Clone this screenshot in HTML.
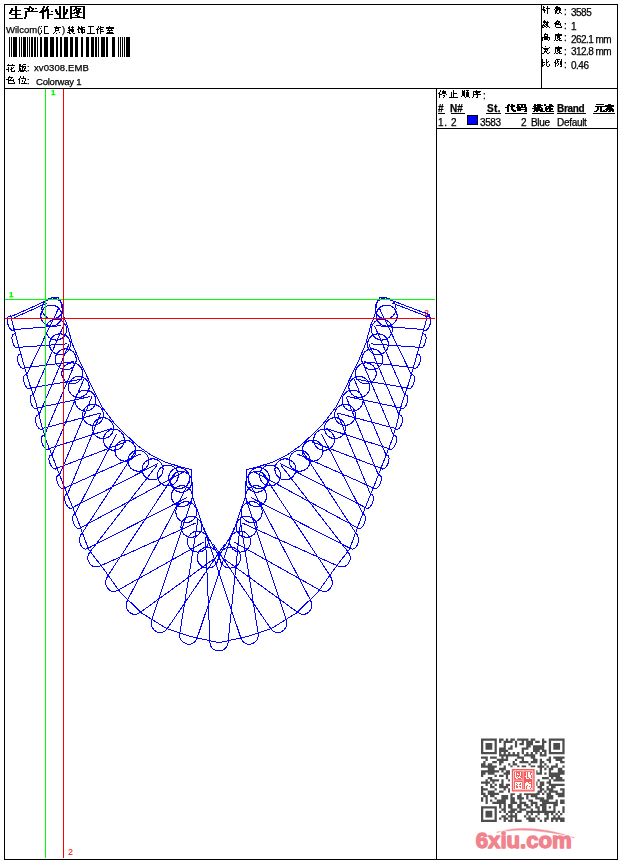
<!DOCTYPE html>
<html><head><meta charset="utf-8"><style>
html,body{margin:0;padding:0;background:#fff;width:620px;height:860px;overflow:hidden;}
body{position:relative;font-family:"Liberation Sans",sans-serif;color:#000;}
.t{position:absolute;white-space:nowrap;line-height:1;will-change:transform;-webkit-text-stroke:0.25px currentColor;}
svg{position:absolute;left:0;top:0;}
</style></head><body>
<svg width="620" height="860" viewBox="0 0 620 860" shape-rendering="crispEdges">
<path d="M4 4h614v1h-614zM4 859h614v1h-614zM4 4h1v856h-1zM617 4h1v856h-1zM4 88h614v1h-614zM541 4h1v85h-1zM436 88h1v772h-1zM436 128h182v1h-182z" fill="#000"/>
<path d="M9 37h1v20h-1zM11 37h1v20h-1zM13 37h4v20h-4zM19 37h1v20h-1zM21 37h1v20h-1zM23 37h3v20h-3zM27 37h1v20h-1zM29 37h1v20h-1zM31 37h2v20h-2zM34 37h2v20h-2zM37 37h1v20h-1zM40 37h2v20h-2zM44 37h4v20h-4zM50 37h4v20h-4zM56 37h2v20h-2zM60 37h2v20h-2zM64 37h4v20h-4zM70 37h3v20h-3zM75 37h3v20h-3zM81 37h2v20h-2zM86 37h3v20h-3zM91 37h3v20h-3zM95 37h2v20h-2zM98 37h1v20h-1zM101 37h4v20h-4zM106 37h2v20h-2zM112 37h3v20h-3zM118 37h1v20h-1zM120 37h1v20h-1zM122 37h1v20h-1zM124 37h1v20h-1zM126 37h4v20h-4z" fill="#000"/>
<path d="M15 6h2v1h-2zM15 7h2v1h-2zM11 8h2v1h-2zM15 8h2v1h-2zM11 9h2v1h-2zM15 9h2v1h-2zM10 10h11v1h-11zM10 11h2v1h-2zM15 11h2v1h-2zM9 12h3v1h-3zM15 12h2v1h-2zM9 13h2v1h-2zM15 13h2v1h-2zM11 14h10v1h-10zM15 15h2v1h-2zM15 16h2v1h-2zM15 17h2v1h-2zM9 18h14v1h-14zM29 6h2v1h-2zM29 7h3v1h-3zM24 8h6v1h-6zM31 8h3v1h-3zM35 8h2v1h-2zM27 9h3v1h-3zM32 9h2v1h-2zM28 10h2v1h-2zM31 10h2v1h-2zM25 11h13v1h-13zM25 12h2v1h-2zM25 13h2v1h-2zM25 14h2v1h-2zM25 15h2v1h-2zM25 16h2v1h-2zM24 17h2v1h-2zM24 18h2v1h-2zM43 6h2v1h-2zM47 6h2v1h-2zM43 7h2v1h-2zM46 7h2v1h-2zM42 8h2v1h-2zM46 8h2v1h-2zM42 9h2v1h-2zM45 9h4v1h-4zM41 10h8v1h-8zM40 11h6v1h-6zM47 11h2v1h-2zM51 11h2v1h-2zM39 12h5v1h-5zM47 12h2v1h-2zM42 13h2v1h-2zM47 13h2v1h-2zM42 14h2v1h-2zM47 14h6v1h-6zM42 15h2v1h-2zM47 15h2v1h-2zM42 16h2v1h-2zM47 16h2v1h-2zM42 17h2v1h-2zM47 17h2v1h-2zM42 18h2v1h-2zM47 18h2v1h-2zM59 6h2v1h-2zM63 6h2v1h-2zM59 7h2v1h-2zM63 7h2v1h-2zM59 8h2v1h-2zM63 8h2v1h-2zM55 9h2v1h-2zM59 9h2v1h-2zM63 9h2v1h-2zM66 9h2v1h-2zM55 10h2v1h-2zM59 10h2v1h-2zM63 10h2v1h-2zM66 10h2v1h-2zM55 11h3v1h-3zM59 11h2v1h-2zM63 11h2v1h-2zM66 11h2v1h-2zM56 12h2v1h-2zM59 12h2v1h-2zM63 12h4v1h-4zM56 13h5v1h-5zM63 13h4v1h-4zM57 14h4v1h-4zM63 14h3v1h-3zM59 15h2v1h-2zM63 15h2v1h-2zM59 16h2v1h-2zM63 16h2v1h-2zM59 17h2v1h-2zM63 17h2v1h-2zM54 18h15v1h-15zM70 6h15v1h-15zM70 7h2v1h-2zM75 7h2v1h-2zM83 7h2v1h-2zM70 8h2v1h-2zM75 8h6v1h-6zM83 8h2v1h-2zM70 9h2v1h-2zM74 9h3v1h-3zM78 9h3v1h-3zM83 9h2v1h-2zM70 10h2v1h-2zM73 10h2v1h-2zM76 10h4v1h-4zM83 10h2v1h-2zM70 11h2v1h-2zM76 11h4v1h-4zM83 11h2v1h-2zM70 12h2v1h-2zM74 12h8v1h-8zM83 12h2v1h-2zM70 13h5v1h-5zM76 13h3v1h-3zM83 13h2v1h-2zM70 14h2v1h-2zM77 14h2v1h-2zM83 14h2v1h-2zM70 15h2v1h-2zM75 15h3v1h-3zM83 15h2v1h-2zM70 16h2v1h-2zM77 16h3v1h-3zM83 16h2v1h-2zM70 17h15v1h-15zM70 18h2v1h-2zM83 18h2v1h-2zM41 26h1v1h-1zM44 26h4v1h-4zM44 27h1v1h-1zM40 28h1v1h-1zM44 28h1v1h-1zM44 29h1v1h-1zM41 30h1v1h-1zM44 30h1v1h-1zM41 31h1v1h-1zM44 31h1v1h-1zM41 32h1v1h-1zM44 32h1v1h-1zM40 33h1v1h-1zM44 33h5v1h-5zM56 26h1v1h-1zM54 27h7v1h-7zM55 28h4v1h-4zM55 29h1v1h-1zM58 29h1v1h-1zM55 30h4v1h-4zM55 31h1v1h-1zM54 32h1v1h-1zM59 32h1v1h-1zM53 33h1v1h-1zM56 33h1v1h-1zM69 26h1v1h-1zM72 26h1v1h-1zM68 27h2v1h-2zM71 27h3v1h-3zM68 28h2v1h-2zM72 28h1v1h-1zM69 29h5v1h-5zM68 30h6v1h-6zM69 31h1v1h-1zM71 31h3v1h-3zM67 32h3v1h-3zM72 32h1v1h-1zM69 33h2v1h-2zM73 33h2v1h-2zM78 26h1v1h-1zM81 26h1v1h-1zM78 27h2v1h-2zM81 27h4v1h-4zM78 28h5v1h-5zM77 29h2v1h-2zM80 29h5v1h-5zM78 30h1v1h-1zM81 30h2v1h-2zM84 30h1v1h-1zM78 31h1v1h-1zM81 31h2v1h-2zM84 31h1v1h-1zM78 32h2v1h-2zM81 32h4v1h-4zM82 33h1v1h-1zM88 26h6v1h-6zM90 27h1v1h-1zM90 28h1v1h-1zM90 29h1v1h-1zM90 30h1v1h-1zM90 31h1v1h-1zM90 32h1v1h-1zM87 33h8v1h-8zM98 26h1v1h-1zM100 26h1v1h-1zM98 27h1v1h-1zM100 27h4v1h-4zM97 28h1v1h-1zM99 28h2v1h-2zM96 29h3v1h-3zM100 29h3v1h-3zM97 30h1v1h-1zM100 30h1v1h-1zM97 31h1v1h-1zM100 31h4v1h-4zM97 32h1v1h-1zM100 32h1v1h-1zM97 33h1v1h-1zM100 33h1v1h-1zM109 26h1v1h-1zM106 27h8v1h-8zM106 28h8v1h-8zM108 29h1v1h-1zM111 29h1v1h-1zM107 30h6v1h-6zM109 31h1v1h-1zM107 32h6v1h-6zM106 33h8v1h-8zM8 64h1v1h-1zM12 64h1v1h-1zM7 65h8v1h-8zM8 67h1v1h-1zM11 67h1v1h-1zM13 67h1v1h-1zM8 68h1v1h-1zM11 68h2v1h-2zM6 69h3v1h-3zM10 69h2v1h-2zM8 70h1v1h-1zM11 70h1v1h-1zM14 70h1v1h-1zM8 71h1v1h-1zM11 71h4v1h-4zM19 64h2v1h-2zM23 64h3v1h-3zM19 65h2v1h-2zM22 65h1v1h-1zM19 66h7v1h-7zM19 67h1v1h-1zM22 67h2v1h-2zM25 67h1v1h-1zM19 68h2v1h-2zM22 68h1v1h-1zM24 68h2v1h-2zM19 69h2v1h-2zM22 69h1v1h-1zM24 69h1v1h-1zM19 70h7v1h-7zM18 71h1v1h-1zM20 71h4v1h-4zM26 71h1v1h-1zM9 76h1v1h-1zM8 77h5v1h-5zM8 78h1v1h-1zM11 78h1v1h-1zM6 79h3v1h-3zM10 79h1v1h-1zM13 79h1v1h-1zM8 80h6v1h-6zM8 81h1v1h-1zM13 81h1v1h-1zM8 82h1v1h-1zM14 82h1v1h-1zM8 83h7v1h-7zM20 76h1v1h-1zM23 76h1v1h-1zM20 77h1v1h-1zM23 77h1v1h-1zM19 78h1v1h-1zM21 78h5v1h-5zM18 79h2v1h-2zM25 79h1v1h-1zM19 80h1v1h-1zM22 80h1v1h-1zM25 80h1v1h-1zM19 81h1v1h-1zM22 81h1v1h-1zM24 81h1v1h-1zM19 82h1v1h-1zM24 82h1v1h-1zM19 83h1v1h-1zM21 83h6v1h-6zM543 6h1v1h-1zM547 6h1v1h-1zM543 7h2v1h-2zM547 7h1v1h-1zM543 8h1v1h-1zM546 8h4v1h-4zM542 9h3v1h-3zM547 9h1v1h-1zM543 10h3v1h-3zM547 10h1v1h-1zM544 11h1v1h-1zM547 11h1v1h-1zM544 12h1v1h-1zM547 12h1v1h-1zM547 13h1v1h-1zM556 6h2v1h-2zM555 7h5v1h-5zM555 8h6v1h-6zM554 9h1v1h-1zM556 9h5v1h-5zM555 10h3v1h-3zM559 10h2v1h-2zM555 11h2v1h-2zM559 11h1v1h-1zM555 12h2v1h-2zM559 12h2v1h-2zM555 13h1v1h-1zM557 13h2v1h-2zM561 13h1v1h-1zM544 20h1v1h-1zM543 21h3v1h-3zM547 21h1v1h-1zM543 22h6v1h-6zM544 23h1v1h-1zM546 23h2v1h-2zM543 24h1v1h-1zM545 24h3v1h-3zM542 25h3v1h-3zM546 25h2v1h-2zM542 26h1v1h-1zM544 26h2v1h-2zM547 26h2v1h-2zM542 27h2v1h-2zM546 27h1v1h-1zM549 27h1v1h-1zM557 20h1v1h-1zM556 21h4v1h-4zM555 22h2v1h-2zM558 22h2v1h-2zM554 23h5v1h-5zM560 23h1v1h-1zM555 24h6v1h-6zM555 25h1v1h-1zM560 25h1v1h-1zM555 26h1v1h-1zM561 26h1v1h-1zM556 27h6v1h-6zM545 33h1v1h-1zM544 34h4v1h-4zM544 35h1v1h-1zM547 35h1v1h-1zM544 36h4v1h-4zM542 37h8v1h-8zM542 38h1v1h-1zM544 38h4v1h-4zM549 38h1v1h-1zM542 39h1v1h-1zM544 39h4v1h-4zM549 39h1v1h-1zM542 40h1v1h-1zM548 40h1v1h-1zM558 33h1v1h-1zM555 34h7v1h-7zM555 35h7v1h-7zM555 36h1v1h-1zM557 36h3v1h-3zM555 37h1v1h-1zM557 37h3v1h-3zM555 38h1v1h-1zM557 38h1v1h-1zM559 38h2v1h-2zM555 39h1v1h-1zM558 39h2v1h-2zM554 40h1v1h-1zM556 40h2v1h-2zM559 40h3v1h-3zM545 46h1v1h-1zM542 47h1v1h-1zM549 47h1v1h-1zM543 48h6v1h-6zM544 49h4v1h-4zM545 50h1v1h-1zM547 50h1v1h-1zM544 51h3v1h-3zM544 52h1v1h-1zM546 52h1v1h-1zM549 52h1v1h-1zM542 53h2v1h-2zM547 53h2v1h-2zM558 46h1v1h-1zM555 47h7v1h-7zM555 48h7v1h-7zM555 49h1v1h-1zM557 49h3v1h-3zM555 50h1v1h-1zM557 50h3v1h-3zM555 51h1v1h-1zM557 51h1v1h-1zM559 51h2v1h-2zM555 52h1v1h-1zM558 52h2v1h-2zM554 53h1v1h-1zM556 53h2v1h-2zM559 53h3v1h-3zM542 59h1v1h-1zM546 59h1v1h-1zM542 60h1v1h-1zM546 60h1v1h-1zM542 61h1v1h-1zM546 61h1v1h-1zM548 61h1v1h-1zM542 62h3v1h-3zM546 62h2v1h-2zM542 63h1v1h-1zM546 63h1v1h-1zM542 64h1v1h-1zM544 64h1v1h-1zM546 64h1v1h-1zM549 64h1v1h-1zM542 65h2v1h-2zM546 65h1v1h-1zM549 65h1v1h-1zM542 66h1v1h-1zM547 66h2v1h-2zM556 59h4v1h-4zM561 59h1v1h-1zM555 60h1v1h-1zM557 60h1v1h-1zM561 60h1v1h-1zM555 61h1v1h-1zM557 61h2v1h-2zM560 61h2v1h-2zM554 62h2v1h-2zM557 62h1v1h-1zM560 62h2v1h-2zM555 63h2v1h-2zM558 63h1v1h-1zM560 63h2v1h-2zM555 64h1v1h-1zM558 64h1v1h-1zM560 64h2v1h-2zM555 65h1v1h-1zM557 65h1v1h-1zM561 65h1v1h-1zM555 66h1v1h-1zM560 66h2v1h-2zM440 90h1v1h-1zM443 90h1v1h-1zM440 91h1v1h-1zM442 91h4v1h-4zM439 92h1v1h-1zM442 92h4v1h-4zM438 93h2v1h-2zM442 93h4v1h-4zM439 94h3v1h-3zM446 94h1v1h-1zM439 95h1v1h-1zM443 95h2v1h-2zM439 96h1v1h-1zM444 96h1v1h-1zM439 97h1v1h-1zM443 97h1v1h-1zM453 90h1v1h-1zM453 91h1v1h-1zM451 92h1v1h-1zM453 92h1v1h-1zM451 93h1v1h-1zM453 93h4v1h-4zM451 94h1v1h-1zM453 94h1v1h-1zM451 95h1v1h-1zM453 95h1v1h-1zM451 96h1v1h-1zM453 96h1v1h-1zM449 97h9v1h-9zM462 90h1v1h-1zM464 90h1v1h-1zM466 90h3v1h-3zM462 91h3v1h-3zM467 91h1v1h-1zM462 92h3v1h-3zM466 92h3v1h-3zM462 93h3v1h-3zM466 93h3v1h-3zM462 94h3v1h-3zM466 94h3v1h-3zM462 95h3v1h-3zM466 95h3v1h-3zM461 96h1v1h-1zM464 96h1v1h-1zM466 96h3v1h-3zM465 97h1v1h-1zM469 97h1v1h-1zM476 90h1v1h-1zM473 91h8v1h-8zM473 92h1v1h-1zM475 92h5v1h-5zM473 93h1v1h-1zM476 93h2v1h-2zM473 94h8v1h-8zM473 95h1v1h-1zM477 95h1v1h-1zM473 96h1v1h-1zM477 96h1v1h-1zM472 97h1v1h-1zM476 97h2v1h-2zM508 104h2v1h-2zM511 104h2v1h-2zM507 105h3v1h-3zM511 105h4v1h-4zM507 106h2v1h-2zM510 106h5v1h-5zM505 107h4v1h-4zM511 107h2v1h-2zM507 108h2v1h-2zM511 108h2v1h-2zM507 109h2v1h-2zM511 109h3v1h-3zM507 110h2v1h-2zM512 110h4v1h-4zM507 111h2v1h-2zM513 111h3v1h-3zM517 104h9v1h-9zM517 105h2v1h-2zM521 105h2v1h-2zM524 105h2v1h-2zM517 106h3v1h-3zM521 106h2v1h-2zM524 106h2v1h-2zM516 107h11v1h-11zM517 108h4v1h-4zM525 108h2v1h-2zM517 109h10v1h-10zM517 110h4v1h-4zM525 110h2v1h-2zM524 111h3v1h-3zM534 104h2v1h-2zM537 104h4v1h-4zM534 105h9v1h-9zM533 106h3v1h-3zM537 106h4v1h-4zM534 107h8v1h-8zM532 108h8v1h-8zM541 108h2v1h-2zM534 109h9v1h-9zM534 110h9v1h-9zM533 111h2v1h-2zM536 111h2v1h-2zM540 111h3v1h-3zM544 104h2v1h-2zM549 104h3v1h-3zM544 105h2v1h-2zM549 105h4v1h-4zM546 106h8v1h-8zM545 107h2v1h-2zM548 107h3v1h-3zM545 108h8v1h-8zM545 109h3v1h-3zM549 109h4v1h-4zM545 110h2v1h-2zM549 110h2v1h-2zM543 111h2v1h-2zM546 111h8v1h-8zM596 104h8v1h-8zM595 106h10v1h-10zM597 107h2v1h-2zM600 107h2v1h-2zM597 108h2v1h-2zM600 108h2v1h-2zM597 109h2v1h-2zM600 109h2v1h-2zM596 110h2v1h-2zM600 110h2v1h-2zM603 110h2v1h-2zM594 111h3v1h-3zM600 111h5v1h-5zM608 104h3v1h-3zM605 105h9v1h-9zM605 106h9v1h-9zM607 107h5v1h-5zM606 108h7v1h-7zM605 109h9v1h-9zM606 110h2v1h-2zM609 110h5v1h-5zM605 111h2v1h-2zM608 111h3v1h-3zM612 111h2v1h-2z" fill="#000"/>
<path d="M438 113h7v1h-7zM451 113h14v1h-14zM486 113h15v1h-15zM505 113h22v1h-22zM532 113h22v1h-22zM557 113h29v1h-29zM593 113h22v1h-22z" fill="#000"/>
<rect x="467" y="115" width="11" height="10" fill="#000"/><rect x="468" y="116" width="9" height="8" fill="#0000ff"/>
</svg>
<svg width="620" height="860" viewBox="0 0 620 860"><path d="M11 317 L18 343.7 L25 368.8 L30 385.5 L36.3 403.7 L41.8 426 L46 440 L62 481 L77.7 520 L88.4 549 L104.8 570.6 L120 592 L141.6 613 L166.8 628.7 L190 636.4 L219 642.7 L248 636.4 L271.2 628.7 L296.4 613 L318 592 L333.2 570.6 L349.6 549 L360.3 520 L376 481 L392 440 L396.2 426 L401.7 403.7 L408 385.5 L413 368.8 L420 343.7 L427 317 M47 300.5 L52 297.5 L58 297.5 L61 302 L63.4 316 L67.4 325.5 L72 343 L78.7 359 L82 366 L93 389 L102 407 L115 424 L125 434 L138 446 L151 455 L164 461.6 L179 466.5 L191.3 469.7 L193 498 L204.5 531 L219 556 L233.5 531 L245 498 L246.7 469.7 L259 466.5 L274 461.6 L287 455 L300 446 L313 434 L323 424 L336 407 L345 389 L356 366 L359.3 359 L366 343 L370.6 325.5 L374.6 316 L377 302 L380 297.5 L386 297.5 L391 300.5 M10 317L47 300.5M11.5 319L47.5 302.8 M430 315L392 300.5M428.5 317L391.5 302.8M430 315L424 312M430 315L425 317 M10.7 316C3.7 314.8 8.8 334.1 14.3 329.6L61.5 325.6 M15.4 333.8C8.3 332.6 13.5 351.9 19 347.3L66.6 343.9 M20.9 354.2C13.9 353 19.2 372.3 24.7 367.7L74 361.7 M58.8 307.9L26.7 374.5C19.6 373.6 25.4 392.7 30.8 387.9L82.2 379.2 M63.3 326.3L33.3 394.6C26.2 393.7 32.3 412.8 37.6 407.9L90.5 396.5 M68.9 344.5L39 414.9C32 413.6 36.9 433 42.5 428.5L100.1 413.2 M75.6 362.2L44.4 435.4C37.3 434.8 44 453.6 49.1 448.6L112.2 428.3 M83.7 379.4L51.9 455.1C44.8 454.7 52 473.3 57 468.2L126 441.8 M92 396.6L59.6 474.8C52.4 474.5 59.8 493 64.7 487.9L140.9 453.9 M100.7 413.5L67.4 494.5C60.3 494.1 67.7 512.7 72.7 507.5L157.7 463.6 M116.7 433.7L75.2 513.5C69.1 515.5 74.9 532.5 80.7 527.7L184 471.7 M135.3 451.4L82.4 532.7C76.5 537.5 80.8 552.8 88.1 548.2L187.3 497.5 M157.2 464.9L90.3 551.5C83.6 559.7 91.5 570.2 101 565.6L195.4 523.2 M176.4 471.8L108.1 575.3C102.1 584.5 108.9 595.3 118.5 589.9L204 542 M189.3 481.9L127.8 599.6C122.7 609.3 131.8 618.6 140.7 612.1L213.8 559 M191.3 501.2L151.9 619.4C148.4 629.8 160.9 638 167.1 628.9L224.7 544.2 M197.9 519.4L179.8 633.4C178 644.2 193.5 648.8 197 638.4L234.2 527.9 M205.5 537.3L210 642.7C210.5 653.7 226.9 653.6 228 642.7L241.7 510.4 M203.8 527.9L241 638.4C244.5 648.8 260 644.2 258.2 633.4L240.1 519.4 M213.3 544.2L270.9 628.9C277.1 638 289.6 629.8 286.1 619.4L246.7 501.2 M224.2 559L297.3 612.1C306.2 618.6 315.3 609.3 310.2 599.6L248.7 481.9 M234 542L319.5 589.9C329.1 595.3 335.9 584.5 329.9 575.3L261.6 471.8 M242.6 523.2L337 565.6C346.5 570.2 354.4 559.7 347.7 551.5L280.8 464.9 M250.7 497.5L349.9 548.2C357.2 552.8 361.5 537.5 355.6 532.7L302.7 451.4 M254 471.7L357.3 527.7C363.1 532.5 368.9 515.5 362.8 513.5L321.3 433.7 M280.3 463.6L365.3 507.5C370.3 512.7 377.7 494.1 370.6 494.5L337.3 413.5 M297.1 453.9L373.3 487.9C378.2 493 385.6 474.5 378.4 474.8L346 396.6 M312 441.8L381 468.2C386 473.3 393.2 454.7 386.1 455.1L354.3 379.4 M325.8 428.3L388.9 448.6C394 453.6 400.7 434.8 393.6 435.4L362.4 362.2 M337.9 413.2L395.5 428.5C401.1 433 406 413.6 399 414.9L369.1 344.5 M347.5 396.5L400.4 407.9C405.7 412.8 411.8 393.7 404.7 394.6L374.7 326.3 M355.8 379.2L407.2 387.9C412.6 392.7 418.4 373.6 411.3 374.5L379.2 307.9 M364 361.7L413.3 367.7C418.8 372.3 424.1 353 417.1 354.2 M371.4 343.9L419 347.3C424.5 351.9 429.7 332.6 422.6 333.8 M376.5 325.6L423.7 329.6C429.2 334.1 434.3 314.8 427.3 316 M41.9 308.4a10.5 10.5 0 1 0 21 0a10.5 10.5 0 1 0 -21 0 M40.8 315.6a10.5 10.5 0 1 0 21 0a10.5 10.5 0 1 0 -21 0 M45.6 329.6a10.5 10.5 0 1 0 21 0a10.5 10.5 0 1 0 -21 0 M49.5 344.3a10.5 10.5 0 1 0 21 0a10.5 10.5 0 1 0 -21 0 M55.3 359.3a10.5 10.5 0 1 0 21 0a10.5 10.5 0 1 0 -21 0 M61.7 373.3a10.5 10.5 0 1 0 21 0a10.5 10.5 0 1 0 -21 0 M68.2 386.9a10.5 10.5 0 1 0 21 0a10.5 10.5 0 1 0 -21 0 M74.9 400.6a10.5 10.5 0 1 0 21 0a10.5 10.5 0 1 0 -21 0 M82.5 414.9a10.5 10.5 0 1 0 21 0a10.5 10.5 0 1 0 -21 0 M92.5 428.1a10.5 10.5 0 1 0 21 0a10.5 10.5 0 1 0 -21 0 M103.4 439.8a10.5 10.5 0 1 0 21 0a10.5 10.5 0 1 0 -21 0 M114.9 450.7a10.5 10.5 0 1 0 21 0a10.5 10.5 0 1 0 -21 0 M127.8 460.8a10.5 10.5 0 1 0 21 0a10.5 10.5 0 1 0 -21 0 M142.1 469.3a10.5 10.5 0 1 0 21 0a10.5 10.5 0 1 0 -21 0 M157.4 475.5a10.5 10.5 0 1 0 21 0a10.5 10.5 0 1 0 -21 0 M168.6 478.1a10.5 10.5 0 1 0 21 0a10.5 10.5 0 1 0 -21 0 M170.7 481.8a10.5 10.5 0 1 0 21 0a10.5 10.5 0 1 0 -21 0 M171.4 496.1a10.5 10.5 0 1 0 21 0a10.5 10.5 0 1 0 -21 0 M175.8 512.1a10.5 10.5 0 1 0 21 0a10.5 10.5 0 1 0 -21 0 M180.9 526.9a10.5 10.5 0 1 0 21 0a10.5 10.5 0 1 0 -21 0 M187.4 541.6a10.5 10.5 0 1 0 21 0a10.5 10.5 0 1 0 -21 0 M197.3 557.6a10.5 10.5 0 1 0 21 0a10.5 10.5 0 1 0 -21 0 M219.7 557.6a10.5 10.5 0 1 0 21 0a10.5 10.5 0 1 0 -21 0 M229.6 541.6a10.5 10.5 0 1 0 21 0a10.5 10.5 0 1 0 -21 0 M236.1 526.9a10.5 10.5 0 1 0 21 0a10.5 10.5 0 1 0 -21 0 M241.2 512.1a10.5 10.5 0 1 0 21 0a10.5 10.5 0 1 0 -21 0 M245.6 496.1a10.5 10.5 0 1 0 21 0a10.5 10.5 0 1 0 -21 0 M246.3 481.8a10.5 10.5 0 1 0 21 0a10.5 10.5 0 1 0 -21 0 M248.4 478.1a10.5 10.5 0 1 0 21 0a10.5 10.5 0 1 0 -21 0 M259.6 475.5a10.5 10.5 0 1 0 21 0a10.5 10.5 0 1 0 -21 0 M274.9 469.3a10.5 10.5 0 1 0 21 0a10.5 10.5 0 1 0 -21 0 M289.2 460.8a10.5 10.5 0 1 0 21 0a10.5 10.5 0 1 0 -21 0 M302.1 450.7a10.5 10.5 0 1 0 21 0a10.5 10.5 0 1 0 -21 0 M313.6 439.8a10.5 10.5 0 1 0 21 0a10.5 10.5 0 1 0 -21 0 M324.5 428.1a10.5 10.5 0 1 0 21 0a10.5 10.5 0 1 0 -21 0 M334.5 414.9a10.5 10.5 0 1 0 21 0a10.5 10.5 0 1 0 -21 0 M342.1 400.6a10.5 10.5 0 1 0 21 0a10.5 10.5 0 1 0 -21 0 M348.8 386.9a10.5 10.5 0 1 0 21 0a10.5 10.5 0 1 0 -21 0 M355.3 373.3a10.5 10.5 0 1 0 21 0a10.5 10.5 0 1 0 -21 0 M361.7 359.3a10.5 10.5 0 1 0 21 0a10.5 10.5 0 1 0 -21 0 M367.5 344.3a10.5 10.5 0 1 0 21 0a10.5 10.5 0 1 0 -21 0 M371.4 329.6a10.5 10.5 0 1 0 21 0a10.5 10.5 0 1 0 -21 0 M376.2 315.6a10.5 10.5 0 1 0 21 0a10.5 10.5 0 1 0 -21 0 M375.1 308.4a10.5 10.5 0 1 0 21 0a10.5 10.5 0 1 0 -21 0" fill="none" stroke="#0000ff" stroke-width="1" shape-rendering="crispEdges"/></svg>
<svg width="620" height="860" viewBox="0 0 620 860" shape-rendering="crispEdges"><path d="M45 89h1v769h-1zM5 299h430v1h-430z" fill="#00ff00"/><path d="M63 89h1v769h-1zM5 318h430v1h-430z" fill="#ff0000"/></svg>
<svg width="620" height="860" viewBox="0 0 620 860"><path d="M481.00 738.50h15.82v2.26h-15.82zM499.08 738.50h4.52v2.26h-4.52zM505.85 738.50h2.26v2.26h-2.26zM510.37 738.50h4.52v2.26h-4.52zM517.15 738.50h11.30v2.26h-11.30zM530.71 738.50h4.52v2.26h-4.52zM542.01 738.50h2.26v2.26h-2.26zM548.78 738.50h15.82v2.26h-15.82zM481.00 740.76h2.26v2.26h-2.26zM494.56 740.76h2.26v2.26h-2.26zM499.08 740.76h2.26v2.26h-2.26zM503.59 740.76h9.04v2.26h-9.04zM514.89 740.76h2.26v2.26h-2.26zM521.67 740.76h2.26v2.26h-2.26zM526.19 740.76h6.78v2.26h-6.78zM535.23 740.76h4.52v2.26h-4.52zM542.01 740.76h4.52v2.26h-4.52zM548.78 740.76h2.26v2.26h-2.26zM562.34 740.76h2.26v2.26h-2.26zM481.00 743.02h2.26v2.26h-2.26zM485.52 743.02h6.78v2.26h-6.78zM494.56 743.02h2.26v2.26h-2.26zM503.59 743.02h2.26v2.26h-2.26zM514.89 743.02h2.26v2.26h-2.26zM519.41 743.02h4.52v2.26h-4.52zM526.19 743.02h6.78v2.26h-6.78zM542.01 743.02h2.26v2.26h-2.26zM548.78 743.02h2.26v2.26h-2.26zM553.30 743.02h6.78v2.26h-6.78zM562.34 743.02h2.26v2.26h-2.26zM481.00 745.28h2.26v2.26h-2.26zM485.52 745.28h6.78v2.26h-6.78zM494.56 745.28h2.26v2.26h-2.26zM503.59 745.28h2.26v2.26h-2.26zM510.37 745.28h2.26v2.26h-2.26zM514.89 745.28h2.26v2.26h-2.26zM526.19 745.28h4.52v2.26h-4.52zM532.97 745.28h11.30v2.26h-11.30zM548.78 745.28h2.26v2.26h-2.26zM553.30 745.28h6.78v2.26h-6.78zM562.34 745.28h2.26v2.26h-2.26zM481.00 747.54h2.26v2.26h-2.26zM485.52 747.54h6.78v2.26h-6.78zM494.56 747.54h2.26v2.26h-2.26zM499.08 747.54h6.78v2.26h-6.78zM508.11 747.54h4.52v2.26h-4.52zM521.67 747.54h6.78v2.26h-6.78zM532.97 747.54h11.30v2.26h-11.30zM548.78 747.54h2.26v2.26h-2.26zM553.30 747.54h6.78v2.26h-6.78zM562.34 747.54h2.26v2.26h-2.26zM481.00 749.80h2.26v2.26h-2.26zM494.56 749.80h2.26v2.26h-2.26zM499.08 749.80h9.04v2.26h-9.04zM521.67 749.80h2.26v2.26h-2.26zM532.97 749.80h6.78v2.26h-6.78zM542.01 749.80h4.52v2.26h-4.52zM548.78 749.80h2.26v2.26h-2.26zM562.34 749.80h2.26v2.26h-2.26zM481.00 752.06h15.82v2.26h-15.82zM499.08 752.06h2.26v2.26h-2.26zM503.59 752.06h2.26v2.26h-2.26zM508.11 752.06h2.26v2.26h-2.26zM512.63 752.06h2.26v2.26h-2.26zM517.15 752.06h2.26v2.26h-2.26zM521.67 752.06h2.26v2.26h-2.26zM526.19 752.06h2.26v2.26h-2.26zM530.71 752.06h2.26v2.26h-2.26zM535.23 752.06h2.26v2.26h-2.26zM539.75 752.06h2.26v2.26h-2.26zM544.26 752.06h2.26v2.26h-2.26zM548.78 752.06h15.82v2.26h-15.82zM499.08 754.32h20.34v2.26h-20.34zM523.93 754.32h11.30v2.26h-11.30zM539.75 754.32h6.78v2.26h-6.78zM481.00 756.58h6.78v2.26h-6.78zM490.04 756.58h6.78v2.26h-6.78zM501.34 756.58h2.26v2.26h-2.26zM505.85 756.58h2.26v2.26h-2.26zM517.15 756.58h6.78v2.26h-6.78zM530.71 756.58h4.52v2.26h-4.52zM548.78 756.58h2.26v2.26h-2.26zM553.30 756.58h11.30v2.26h-11.30zM485.52 758.84h2.26v2.26h-2.26zM496.82 758.84h11.30v2.26h-11.30zM514.89 758.84h2.26v2.26h-2.26zM521.67 758.84h2.26v2.26h-2.26zM532.97 758.84h4.52v2.26h-4.52zM539.75 758.84h2.26v2.26h-2.26zM546.52 758.84h4.52v2.26h-4.52zM555.56 758.84h6.78v2.26h-6.78zM483.26 761.09h2.26v2.26h-2.26zM492.30 761.09h4.52v2.26h-4.52zM499.08 761.09h4.52v2.26h-4.52zM512.63 761.09h2.26v2.26h-2.26zM519.41 761.09h9.04v2.26h-9.04zM530.71 761.09h6.78v2.26h-6.78zM539.75 761.09h4.52v2.26h-4.52zM548.78 761.09h2.26v2.26h-2.26zM560.08 761.09h4.52v2.26h-4.52zM481.00 763.35h4.52v2.26h-4.52zM487.78 763.35h4.52v2.26h-4.52zM499.08 763.35h2.26v2.26h-2.26zM508.11 763.35h2.26v2.26h-2.26zM512.63 763.35h4.52v2.26h-4.52zM528.45 763.35h2.26v2.26h-2.26zM539.75 763.35h2.26v2.26h-2.26zM544.26 763.35h2.26v2.26h-2.26zM555.56 763.35h2.26v2.26h-2.26zM481.00 765.61h15.82v2.26h-15.82zM503.59 765.61h2.26v2.26h-2.26zM510.37 765.61h2.26v2.26h-2.26zM517.15 765.61h2.26v2.26h-2.26zM521.67 765.61h4.52v2.26h-4.52zM530.71 765.61h4.52v2.26h-4.52zM537.49 765.61h6.78v2.26h-6.78zM546.52 765.61h2.26v2.26h-2.26zM551.04 765.61h6.78v2.26h-6.78zM562.34 765.61h2.26v2.26h-2.26zM487.78 767.87h6.78v2.26h-6.78zM499.08 767.87h6.78v2.26h-6.78zM510.37 767.87h4.52v2.26h-4.52zM521.67 767.87h4.52v2.26h-4.52zM528.45 767.87h4.52v2.26h-4.52zM539.75 767.87h2.26v2.26h-2.26zM544.26 767.87h2.26v2.26h-2.26zM548.78 767.87h4.52v2.26h-4.52zM557.82 767.87h4.52v2.26h-4.52zM481.00 770.13h18.08v2.26h-18.08zM501.34 770.13h2.26v2.26h-2.26zM505.85 770.13h11.30v2.26h-11.30zM521.67 770.13h4.52v2.26h-4.52zM528.45 770.13h2.26v2.26h-2.26zM532.97 770.13h4.52v2.26h-4.52zM539.75 770.13h2.26v2.26h-2.26zM548.78 770.13h2.26v2.26h-2.26zM557.82 770.13h6.78v2.26h-6.78zM481.00 772.39h4.52v2.26h-4.52zM487.78 772.39h6.78v2.26h-6.78zM503.59 772.39h15.82v2.26h-15.82zM526.19 772.39h2.26v2.26h-2.26zM530.71 772.39h11.30v2.26h-11.30zM544.26 772.39h2.26v2.26h-2.26zM548.78 772.39h15.82v2.26h-15.82zM481.00 774.65h2.26v2.26h-2.26zM494.56 774.65h2.26v2.26h-2.26zM499.08 774.65h4.52v2.26h-4.52zM505.85 774.65h2.26v2.26h-2.26zM512.63 774.65h2.26v2.26h-2.26zM526.19 774.65h2.26v2.26h-2.26zM548.78 774.65h11.30v2.26h-11.30zM487.78 776.91h4.52v2.26h-4.52zM505.85 776.91h2.26v2.26h-2.26zM510.37 776.91h6.78v2.26h-6.78zM519.41 776.91h2.26v2.26h-2.26zM526.19 776.91h6.78v2.26h-6.78zM542.01 776.91h6.78v2.26h-6.78zM551.04 776.91h2.26v2.26h-2.26zM555.56 776.91h6.78v2.26h-6.78zM485.52 779.17h2.26v2.26h-2.26zM490.04 779.17h9.04v2.26h-9.04zM501.34 779.17h2.26v2.26h-2.26zM508.11 779.17h4.52v2.26h-4.52zM517.15 779.17h6.78v2.26h-6.78zM526.19 779.17h2.26v2.26h-2.26zM530.71 779.17h2.26v2.26h-2.26zM537.49 779.17h2.26v2.26h-2.26zM548.78 779.17h2.26v2.26h-2.26zM553.30 779.17h11.30v2.26h-11.30zM481.00 781.43h9.04v2.26h-9.04zM492.30 781.43h2.26v2.26h-2.26zM501.34 781.43h2.26v2.26h-2.26zM510.37 781.43h6.78v2.26h-6.78zM521.67 781.43h11.30v2.26h-11.30zM535.23 781.43h2.26v2.26h-2.26zM539.75 781.43h4.52v2.26h-4.52zM546.52 781.43h4.52v2.26h-4.52zM485.52 783.69h2.26v2.26h-2.26zM490.04 783.69h2.26v2.26h-2.26zM494.56 783.69h2.26v2.26h-2.26zM499.08 783.69h4.52v2.26h-4.52zM505.85 783.69h9.04v2.26h-9.04zM519.41 783.69h2.26v2.26h-2.26zM523.93 783.69h2.26v2.26h-2.26zM528.45 783.69h9.04v2.26h-9.04zM539.75 783.69h4.52v2.26h-4.52zM548.78 783.69h15.82v2.26h-15.82zM481.00 785.95h2.26v2.26h-2.26zM490.04 785.95h4.52v2.26h-4.52zM499.08 785.95h9.04v2.26h-9.04zM510.37 785.95h2.26v2.26h-2.26zM519.41 785.95h11.30v2.26h-11.30zM537.49 785.95h4.52v2.26h-4.52zM546.52 785.95h2.26v2.26h-2.26zM551.04 785.95h4.52v2.26h-4.52zM481.00 788.21h6.78v2.26h-6.78zM494.56 788.21h2.26v2.26h-2.26zM503.59 788.21h2.26v2.26h-2.26zM508.11 788.21h2.26v2.26h-2.26zM512.63 788.21h2.26v2.26h-2.26zM519.41 788.21h6.78v2.26h-6.78zM530.71 788.21h4.52v2.26h-4.52zM539.75 788.21h4.52v2.26h-4.52zM546.52 788.21h6.78v2.26h-6.78zM560.08 788.21h4.52v2.26h-4.52zM481.00 790.47h2.26v2.26h-2.26zM487.78 790.47h6.78v2.26h-6.78zM499.08 790.47h4.52v2.26h-4.52zM508.11 790.47h9.04v2.26h-9.04zM519.41 790.47h2.26v2.26h-2.26zM528.45 790.47h2.26v2.26h-2.26zM532.97 790.47h2.26v2.26h-2.26zM537.49 790.47h4.52v2.26h-4.52zM544.26 790.47h2.26v2.26h-2.26zM548.78 790.47h9.04v2.26h-9.04zM562.34 790.47h2.26v2.26h-2.26zM481.00 792.73h4.52v2.26h-4.52zM487.78 792.73h11.30v2.26h-11.30zM510.37 792.73h4.52v2.26h-4.52zM519.41 792.73h2.26v2.26h-2.26zM523.93 792.73h15.82v2.26h-15.82zM542.01 792.73h2.26v2.26h-2.26zM546.52 792.73h4.52v2.26h-4.52zM555.56 792.73h9.04v2.26h-9.04zM483.26 794.99h4.52v2.26h-4.52zM490.04 794.99h4.52v2.26h-4.52zM501.34 794.99h6.78v2.26h-6.78zM510.37 794.99h2.26v2.26h-2.26zM517.15 794.99h4.52v2.26h-4.52zM526.19 794.99h2.26v2.26h-2.26zM530.71 794.99h6.78v2.26h-6.78zM546.52 794.99h6.78v2.26h-6.78zM557.82 794.99h6.78v2.26h-6.78zM481.00 797.25h2.26v2.26h-2.26zM485.52 797.25h2.26v2.26h-2.26zM494.56 797.25h2.26v2.26h-2.26zM501.34 797.25h6.78v2.26h-6.78zM510.37 797.25h4.52v2.26h-4.52zM517.15 797.25h6.78v2.26h-6.78zM526.19 797.25h2.26v2.26h-2.26zM535.23 797.25h9.04v2.26h-9.04zM546.52 797.25h6.78v2.26h-6.78zM481.00 799.51h2.26v2.26h-2.26zM485.52 799.51h2.26v2.26h-2.26zM490.04 799.51h2.26v2.26h-2.26zM496.82 799.51h9.04v2.26h-9.04zM510.37 799.51h4.52v2.26h-4.52zM519.41 799.51h2.26v2.26h-2.26zM528.45 799.51h4.52v2.26h-4.52zM539.75 799.51h9.04v2.26h-9.04zM555.56 799.51h2.26v2.26h-2.26zM560.08 799.51h4.52v2.26h-4.52zM485.52 801.76h2.26v2.26h-2.26zM492.30 801.76h13.56v2.26h-13.56zM510.37 801.76h6.78v2.26h-6.78zM519.41 801.76h6.78v2.26h-6.78zM530.71 801.76h6.78v2.26h-6.78zM542.01 801.76h15.82v2.26h-15.82zM560.08 801.76h4.52v2.26h-4.52zM499.08 804.02h2.26v2.26h-2.26zM503.59 804.02h2.26v2.26h-2.26zM508.11 804.02h4.52v2.26h-4.52zM517.15 804.02h4.52v2.26h-4.52zM523.93 804.02h4.52v2.26h-4.52zM530.71 804.02h2.26v2.26h-2.26zM535.23 804.02h2.26v2.26h-2.26zM539.75 804.02h6.78v2.26h-6.78zM553.30 804.02h4.52v2.26h-4.52zM481.00 806.28h15.82v2.26h-15.82zM499.08 806.28h2.26v2.26h-2.26zM503.59 806.28h2.26v2.26h-2.26zM508.11 806.28h4.52v2.26h-4.52zM517.15 806.28h4.52v2.26h-4.52zM526.19 806.28h4.52v2.26h-4.52zM535.23 806.28h4.52v2.26h-4.52zM542.01 806.28h4.52v2.26h-4.52zM548.78 806.28h2.26v2.26h-2.26zM553.30 806.28h2.26v2.26h-2.26zM562.34 806.28h2.26v2.26h-2.26zM481.00 808.54h2.26v2.26h-2.26zM494.56 808.54h2.26v2.26h-2.26zM501.34 808.54h4.52v2.26h-4.52zM510.37 808.54h6.78v2.26h-6.78zM519.41 808.54h6.78v2.26h-6.78zM530.71 808.54h2.26v2.26h-2.26zM537.49 808.54h2.26v2.26h-2.26zM542.01 808.54h4.52v2.26h-4.52zM553.30 808.54h2.26v2.26h-2.26zM562.34 808.54h2.26v2.26h-2.26zM481.00 810.80h2.26v2.26h-2.26zM485.52 810.80h6.78v2.26h-6.78zM494.56 810.80h2.26v2.26h-2.26zM499.08 810.80h2.26v2.26h-2.26zM503.59 810.80h2.26v2.26h-2.26zM508.11 810.80h6.78v2.26h-6.78zM517.15 810.80h4.52v2.26h-4.52zM526.19 810.80h29.37v2.26h-29.37zM557.82 810.80h2.26v2.26h-2.26zM562.34 810.80h2.26v2.26h-2.26zM481.00 813.06h2.26v2.26h-2.26zM485.52 813.06h6.78v2.26h-6.78zM494.56 813.06h2.26v2.26h-2.26zM505.85 813.06h2.26v2.26h-2.26zM510.37 813.06h2.26v2.26h-2.26zM514.89 813.06h2.26v2.26h-2.26zM526.19 813.06h2.26v2.26h-2.26zM530.71 813.06h2.26v2.26h-2.26zM537.49 813.06h2.26v2.26h-2.26zM544.26 813.06h4.52v2.26h-4.52zM551.04 813.06h2.26v2.26h-2.26zM555.56 813.06h2.26v2.26h-2.26zM560.08 813.06h2.26v2.26h-2.26zM481.00 815.32h2.26v2.26h-2.26zM485.52 815.32h6.78v2.26h-6.78zM494.56 815.32h2.26v2.26h-2.26zM501.34 815.32h4.52v2.26h-4.52zM508.11 815.32h9.04v2.26h-9.04zM523.93 815.32h2.26v2.26h-2.26zM528.45 815.32h2.26v2.26h-2.26zM535.23 815.32h2.26v2.26h-2.26zM546.52 815.32h2.26v2.26h-2.26zM553.30 815.32h2.26v2.26h-2.26zM557.82 815.32h2.26v2.26h-2.26zM481.00 817.58h2.26v2.26h-2.26zM494.56 817.58h2.26v2.26h-2.26zM499.08 817.58h2.26v2.26h-2.26zM503.59 817.58h4.52v2.26h-4.52zM510.37 817.58h2.26v2.26h-2.26zM514.89 817.58h2.26v2.26h-2.26zM526.19 817.58h9.04v2.26h-9.04zM537.49 817.58h2.26v2.26h-2.26zM544.26 817.58h4.52v2.26h-4.52zM551.04 817.58h13.56v2.26h-13.56zM481.00 819.84h15.82v2.26h-15.82zM503.59 819.84h2.26v2.26h-2.26zM508.11 819.84h4.52v2.26h-4.52zM514.89 819.84h6.78v2.26h-6.78zM528.45 819.84h6.78v2.26h-6.78zM539.75 819.84h2.26v2.26h-2.26zM544.26 819.84h2.26v2.26h-2.26zM551.04 819.84h2.26v2.26h-2.26zM555.56 819.84h2.26v2.26h-2.26zM560.08 819.84h4.52v2.26h-4.52z" fill="#4d4d4d"/><rect x="510" y="767.3" width="26.3" height="26" fill="#fff"/><rect x="511.8" y="769" width="22.8" height="22.5" fill="#f85a5a"/><path d="M513.6 770.8h19.2v18.9h-19.2z" fill="none" stroke="#fff" stroke-width="0.8"/><path d="M523.2 771v18.5M514 780.2h9" stroke="#fff" stroke-width="0.6" fill="none"/><path d="M515 772h1v1h-1zM520 772h1v1h-1zM515 773h1v1h-1zM517 773h1v1h-1zM520 773h1v1h-1zM515 774h1v1h-1zM517 774h2v1h-2zM520 774h1v1h-1zM515 775h1v1h-1zM520 775h1v1h-1zM515 776h1v1h-1zM517 776h1v1h-1zM519 776h1v1h-1zM515 777h2v1h-2zM518 777h3v1h-3zM516 778h2v1h-2zM521 778h1v1h-1zM526 772h1v1h-1zM528 772h2v1h-2zM526 773h1v1h-1zM528 773h2v1h-2zM531 773h1v1h-1zM526 774h1v1h-1zM528 774h2v1h-2zM531 774h1v1h-1zM526 775h1v1h-1zM528 775h3v1h-3zM525 776h2v1h-2zM528 776h3v1h-3zM526 777h1v1h-1zM529 777h2v1h-2zM526 778h3v1h-3zM530 778h2v1h-2zM515 782h7v1h-7zM515 783h1v1h-1zM517 783h3v1h-3zM521 783h1v1h-1zM515 784h2v1h-2zM518 784h1v1h-1zM521 784h1v1h-1zM515 785h1v1h-1zM517 785h5v1h-5zM515 786h1v1h-1zM518 786h1v1h-1zM521 786h1v1h-1zM515 787h1v1h-1zM518 787h2v1h-2zM521 787h1v1h-1zM515 788h7v1h-7zM526 782h2v1h-2zM529 782h2v1h-2zM525 783h4v1h-4zM525 784h6v1h-6zM525 785h2v1h-2zM528 785h3v1h-3zM525 786h1v1h-1zM527 786h2v1h-2zM530 786h1v1h-1zM525 787h1v1h-1zM527 787h4v1h-4zM525 788h1v1h-1zM527 788h3v1h-3zM531 788h1v1h-1z" fill="#fff"/><path d="M496.5 832.3Q530 822.5 574.5 837.8Q530 825.8 496.5 832.3z" fill="#f38f98" stroke="#f38f98" stroke-width="0.5"/><text x="475.8" y="847.8" font-family="Liberation Sans" font-weight="bold" font-size="21.5" fill="#fff" stroke="#fff" stroke-width="3.2" stroke-linejoin="round" textLength="96" lengthAdjust="spacingAndGlyphs">6xiu.com</text><text x="475.8" y="847.8" font-family="Liberation Sans" font-weight="bold" font-size="21.5" fill="#f0838d" stroke="#f0838d" stroke-width="1.3" stroke-linejoin="round" textLength="96" lengthAdjust="spacingAndGlyphs">6xiu.com</text></svg>
<div class="t" style="left:6.20px;top:24.76px;font-size:9.5px;font-weight:normal;letter-spacing:0px;color:#000">Wilcom(</div>
<div class="t" style="left:62.00px;top:24.76px;font-size:9.5px;font-weight:normal;letter-spacing:0px;color:#000">)</div>
<div class="t" style="left:27.00px;top:62.76px;font-size:9.5px;font-weight:normal;letter-spacing:0px;color:#000">:</div>
<div class="t" style="left:34.40px;top:62.56px;font-size:9.5px;font-weight:normal;letter-spacing:0.1px;color:#000">xv0308.EMB</div>
<div class="t" style="left:27.00px;top:75.76px;font-size:9.5px;font-weight:normal;letter-spacing:0px;color:#000">:</div>
<div class="t" style="left:35.80px;top:76.76px;font-size:9.5px;font-weight:normal;letter-spacing:-0.22px;color:#000">Colorway 1</div>
<div class="t" style="left:564.00px;top:6.70px;font-size:10px;font-weight:normal;letter-spacing:0px;color:#000">:</div>
<div class="t" style="left:570.80px;top:7.70px;font-size:10px;font-weight:normal;letter-spacing:-0.5px;color:#000">3585</div>
<div class="t" style="left:564.00px;top:20.60px;font-size:10px;font-weight:normal;letter-spacing:0px;color:#000">:</div>
<div class="t" style="left:570.50px;top:21.60px;font-size:10px;font-weight:normal;letter-spacing:0px;color:#000">1</div>
<div class="t" style="left:564.00px;top:33.20px;font-size:10px;font-weight:normal;letter-spacing:0px;color:#000">:</div>
<div class="t" style="left:571.00px;top:34.59px;font-size:10px;font-weight:normal;letter-spacing:-0.55px;color:#000">262.1 mm</div>
<div class="t" style="left:564.00px;top:46.89px;font-size:10px;font-weight:normal;letter-spacing:0px;color:#000">:</div>
<div class="t" style="left:571.00px;top:47.30px;font-size:10px;font-weight:normal;letter-spacing:-0.55px;color:#000">312.8 mm</div>
<div class="t" style="left:564.00px;top:59.70px;font-size:10px;font-weight:normal;letter-spacing:0px;color:#000">:</div>
<div class="t" style="left:571.00px;top:61.09px;font-size:10px;font-weight:normal;letter-spacing:-0.5px;color:#000">0.46</div>
<div class="t" style="left:483.00px;top:90.69px;font-size:10px;font-weight:normal;letter-spacing:0px;color:#000">:</div>
<div class="t" style="left:438.00px;top:103.69px;font-size:10px;font-weight:bold;letter-spacing:0px;color:#000">#</div>
<div class="t" style="left:449.90px;top:103.69px;font-size:10px;font-weight:bold;letter-spacing:0px;color:#000">N#</div>
<div class="t" style="left:487.10px;top:103.69px;font-size:10px;font-weight:bold;letter-spacing:0.4px;color:#000">St.</div>
<div class="t" style="left:556.50px;top:103.69px;font-size:10px;font-weight:bold;letter-spacing:-0.3px;color:#000">Brand</div>
<div class="t" style="left:437.50px;top:117.69px;font-size:10px;font-weight:normal;letter-spacing:0.6px;color:#000">1.</div>
<div class="t" style="left:451.00px;top:117.69px;font-size:10px;font-weight:normal;letter-spacing:0px;color:#000">2</div>
<div class="t" style="left:480.00px;top:117.69px;font-size:10px;font-weight:normal;letter-spacing:-0.4px;color:#000">3583</div>
<div class="t" style="left:521.00px;top:117.69px;font-size:10px;font-weight:normal;letter-spacing:0px;color:#000">2</div>
<div class="t" style="left:531.00px;top:117.69px;font-size:10px;font-weight:normal;letter-spacing:-0.3px;color:#000">Blue</div>
<div class="t" style="left:556.50px;top:117.69px;font-size:10px;font-weight:normal;letter-spacing:-0.3px;color:#000">Default</div>

<div class="t" style="left:50.5px;top:88.5px;font-size:8px;font-weight:bold;color:#00ff00;">1</div>
<div class="t" style="left:8.5px;top:291px;font-size:8px;font-weight:bold;color:#00ff00;">1</div>
<div class="t" style="left:67.5px;top:848px;font-size:9px;color:#ff0000;-webkit-text-stroke:0;">2</div>
<div class="t" style="left:424px;top:309px;font-size:9px;color:#ff0000;-webkit-text-stroke:0;">2</div>
</body></html>
